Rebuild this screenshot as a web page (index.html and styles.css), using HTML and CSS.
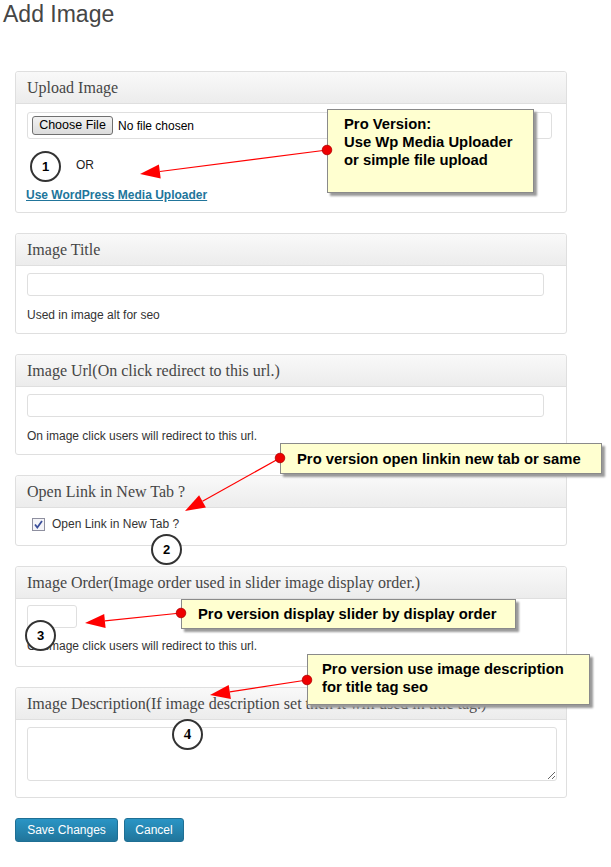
FILE: index.html
```html
<!DOCTYPE html>
<html>
<head>
<meta charset="utf-8">
<title>Add Image</title>
<link rel="stylesheet" href="styles.css">
</head>
<body>
<div class="page">
  <h2 class="page-title">Add Image</h2>

  <form class="form">
    <div class="postbox pb-upload">
      <h3 class="hndle">Upload Image</h3>
      <div class="inside">
        <div class="filebox">
          <span class="choose-btn">Choose File</span>
          <span class="nofile">No file chosen</span>
        </div>
        <p class="or">OR</p>
        <a class="media-link" href="#">Use WordPress Media Uploader</a>
      </div>
    </div>

    <div class="postbox pb-field">
      <h3 class="hndle">Image Title</h3>
      <div class="inside">
        <input class="text-input" type="text">
        <p class="help">Used in image alt for seo</p>
      </div>
    </div>

    <div class="postbox pb-field">
      <h3 class="hndle">Image Url(On click redirect to this url.)</h3>
      <div class="inside">
        <input class="text-input" type="text">
        <p class="help">On image click users will redirect to this url.</p>
      </div>
    </div>

    <div class="postbox pb-check">
      <h3 class="hndle">Open Link in New Tab ?</h3>
      <div class="inside">
        <label class="check-label">
          <span class="checkbox"><svg width="13" height="13" viewBox="0 0 13 13"><rect x="0.5" y="0.5" width="12" height="12" fill="#f4f4f8" stroke="#8e8f9f"/><path d="M3 6.5 L5.3 9.5 L10 3" fill="none" stroke="#3b4f9a" stroke-width="1.8"/></svg></span>
          <span>Open Link in New Tab ?</span>
        </label>
      </div>
    </div>

    <div class="postbox pb-order">
      <h3 class="hndle">Image Order(Image order used in slider image display order.)</h3>
      <div class="inside">
        <input class="small-input" type="text">
        <p class="help">On image click users will redirect to this url.</p>
      </div>
    </div>

    <div class="postbox pb-desc">
      <h3 class="hndle">Image Description(If image description set then it will used in title tag.)</h3>
      <div class="inside">
        <textarea class="desc-area"></textarea>
      </div>
    </div>

    <div class="actions">
      <button type="button" class="btn-primary">Save Changes</button>
      <button type="button" class="btn-primary">Cancel</button>
    </div>
  </form>

  <svg class="arrows" width="611" height="867" viewBox="0 0 611 867">
    <g stroke="#ff0000" stroke-width="1.2" fill="none">
      <line x1="327" y1="150" x2="159.8" y2="171.5"/>
      <line x1="280" y1="458" x2="202.5" y2="501.3"/>
      <line x1="181" y1="613" x2="104.9" y2="620.9"/>
      <line x1="307" y1="680" x2="229.8" y2="691.9"/>
    </g>
    <g fill="#ff0000">
      <polygon points="140,174 158.9,164.5 160.7,178.4"/>
      <polygon points="185,511 199.1,495.2 205.9,507.4"/>
      <polygon points="85,623 104.2,613.9 105.6,627.9"/>
      <polygon points="210,695 228.7,685 230.9,698.9"/>
    </g>
  </svg>

  <div class="callout c1">Pro Version:<br>Use Wp Media Uploader<br>or simple file upload</div>
  <div class="callout c2">Pro version open linkin new tab or same</div>
  <div class="callout c3">Pro version display slider by display order</div>
  <div class="callout c4">Pro version use image description<br>for title tag seo</div>

  <svg class="dots" width="611" height="867" viewBox="0 0 611 867">
    <g fill="#ee0000" stroke="#b00000" stroke-width="0.8">
      <circle cx="327" cy="150" r="4.8"/>
      <circle cx="280" cy="458" r="4.8"/>
      <circle cx="181" cy="613" r="4.8"/>
      <circle cx="307" cy="680" r="4.8"/>
    </g>
  </svg>

  <span class="step s1">1</span>
  <span class="step s2">2</span>
  <span class="step s3">3</span>
  <span class="step s4 serif">4</span>
</div>
</body>
</html>
```

FILE: styles.css
```css
html, body {
  margin: 0;
  padding: 0;
  background: #ffffff;
}

.page {
  position: relative;
  width: 611px;
  min-height: 867px;
  font-family: "Liberation Sans", Arial, sans-serif;
  font-size: 12px;
  color: #333333;
}

.page-title {
  margin: 0;
  padding: 0 0 0 3px;
  font-family: "Liberation Sans", Arial, sans-serif;
  font-weight: normal;
  font-size: 23px;
  line-height: 29px;
  color: #464646;
}

.form {
  margin: 42px 0 0 15px;
  width: 552px;
}

.postbox {
  box-sizing: border-box;
  border: 1px solid #dfdfdf;
  border-radius: 3px;
  background: #ffffff;
  margin-bottom: 20px;
}

.hndle {
  box-sizing: border-box;
  margin: 0;
  height: 32px;
  padding: 0 0 0 11px;
  border-bottom: 1px solid #dfdfdf;
  background: linear-gradient(to bottom, #f9f9f9, #ececec);
  font-family: "Liberation Serif", Georgia, serif;
  font-weight: normal;
  font-size: 16px;
  line-height: 32px;
  color: #464646;
  white-space: nowrap;
  border-radius: 3px 3px 0 0;
}

.inside {
  padding: 0 0 0 11px;
}

/* upload */
.pb-upload .inside {
  height: 108px;
  padding-top: 8px;
  box-sizing: border-box;
}

.filebox {
  box-sizing: border-box;
  width: 525px;
  height: 27px;
  border: 1px solid #dfdfdf;
  border-radius: 3px;
  display: flex;
  align-items: center;
  padding-left: 4px;
  gap: 5px;
}

.choose-btn {
  box-sizing: border-box;
  width: 81px;
  height: 19px;
  border: 1px solid #707070;
  border-radius: 3px;
  background: linear-gradient(to bottom, #f2f2f2, #dcdcdc);
  font-size: 12.5px;
  line-height: 17px;
  text-align: center;
  color: #000;
}

.nofile {
  color: #000;
  font-size: 12px;
}

.or {
  margin: 18px 0 0 0;
  padding-left: 49px;
  line-height: 16px;
  color: #222;
}

.media-link {
  display: block;
  margin: 14px 0 0 -1px;
  width: max-content;
  line-height: 16px;
  font-weight: bold;
  color: #21759b;
  text-decoration: underline;
}

/* text fields */
.pb-field .inside {
  height: 67px;
  padding-top: 7px;
  box-sizing: border-box;
}

.text-input {
  display: block;
  box-sizing: border-box;
  width: 517px;
  height: 23px;
  margin: 0;
  border: 1px solid #dfdfdf;
  border-radius: 3px;
  background: #fff;
  outline: none;
}

.help {
  margin: 11px 0 0 0;
  line-height: 16px;
  color: #333;
}

/* checkbox */
.pb-check .inside {
  height: 37px;
  padding-top: 8px;
  padding-left: 16px;
  box-sizing: border-box;
}

.check-label {
  display: flex;
  align-items: center;
  gap: 7px;
  line-height: 16px;
  color: #333;
}

.checkbox {
  display: flex;
  width: 13px;
  height: 13px;
}

/* order */
.pb-order .inside {
  height: 67px;
  padding-top: 6px;
  box-sizing: border-box;
}

.small-input {
  display: block;
  box-sizing: border-box;
  width: 50px;
  height: 23px;
  margin: 0;
  border: 1px solid #dfdfdf;
  border-radius: 3px;
  background: #fff;
  outline: none;
}

.pb-order .help {
  margin-top: 10px;
}

/* description */
.pb-desc .inside {
  height: 77px;
  padding-top: 7px;
  box-sizing: border-box;
}

.desc-area {
  display: block;
  box-sizing: border-box;
  width: 530px;
  height: 54px;
  margin: 0;
  border: 1px solid #dfdfdf;
  border-radius: 3px;
  background: #fff;
  outline: none;
  resize: both;
}

/* actions */
.actions {
  display: flex;
  gap: 6px;
  margin-top: 20px;
}

.btn-primary {
  box-sizing: border-box;
  height: 24px;
  padding: 0;
  border: 1px solid #1f6f94;
  border-radius: 3px;
  background: linear-gradient(to bottom, #2a95c5, #21759b);
  color: #ffffff;
  font-family: "Liberation Sans", Arial, sans-serif;
  font-size: 12px;
  line-height: 22px;
}

.btn-primary:first-child {
  width: 103px;
}

.btn-primary:last-child {
  width: 60px;
}

/* annotations */
.arrows, .dots {
  position: absolute;
  left: 0;
  top: 0;
  pointer-events: none;
}

.arrows { z-index: 2; }
.dots { z-index: 4; }

.callout {
  position: absolute;
  z-index: 3;
  box-sizing: border-box;
  background: #ffffd0;
  border: 1px solid #8a8a8a;
  box-shadow: 3px 3px 2px #9a9a9a;
  font-family: "Liberation Sans", Arial, sans-serif;
  font-weight: bold;
  font-size: 14.8px;
  line-height: 18px;
  color: #000;
  white-space: nowrap;
}

.c1 {
  left: 327px;
  top: 109px;
  width: 207px;
  height: 84px;
  padding: 5px 0 0 16px;
}

.c2 {
  left: 280px;
  top: 443px;
  width: 322px;
  height: 31px;
  padding: 6px 0 0 16px;
}

.c3 {
  left: 181px;
  top: 599px;
  width: 335px;
  height: 30px;
  padding: 5px 0 0 16px;
}

.c4 {
  left: 307px;
  top: 654px;
  width: 283px;
  height: 51px;
  padding: 5px 0 0 14px;
}

.step {
  position: absolute;
  z-index: 5;
  box-sizing: border-box;
  width: 31px;
  height: 31px;
  border: 2px solid #333;
  border-radius: 50%;
  background: #fff;
  display: flex;
  align-items: center;
  justify-content: center;
  font-family: "Liberation Sans", Arial, sans-serif;
  font-weight: bold;
  font-size: 13px;
  color: #000;
}

.step.serif {
  font-family: "Liberation Serif", "Times New Roman", serif;
  font-size: 15px;
}

.s1 { left: 30px; top: 151px; }
.s2 { left: 151px; top: 534px; }
.s3 { left: 25px; top: 620px; }
.s4 { left: 172px; top: 719px; }
```
